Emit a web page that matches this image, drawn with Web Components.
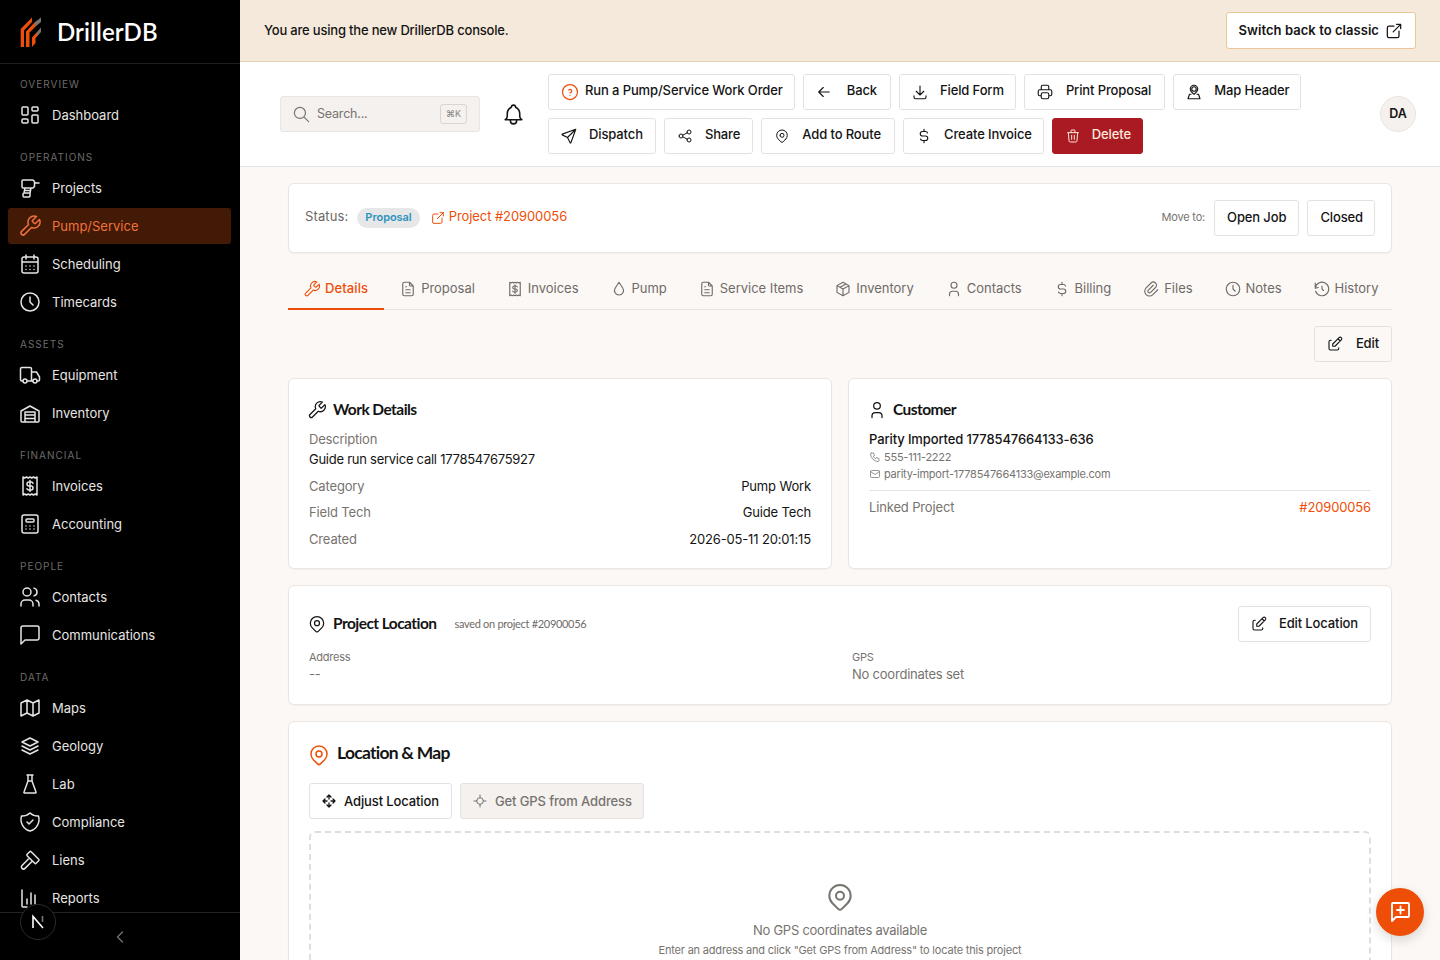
<!DOCTYPE html>
<html lang="en">
<head>
<meta charset="utf-8">
<title>DrillerDB</title>
<style>
    html, body { margin: 0; height: 100%; overflow: hidden; background: #fcf8f5; }
    body { font-family: "Inter", "Liberation Sans", sans-serif; font-size: 13px; color: #141414; }
</style>
</head>
<body>
<driller-app></driller-app>
<script>
const ICONS = {
    dashboard: 'M5 4h4a1 1 0 0 1 1 1v6a1 1 0 0 1 -1 1h-4a1 1 0 0 1 -1 -1v-6a1 1 0 0 1 1 -1M5 16h4a1 1 0 0 1 1 1v2a1 1 0 0 1 -1 1h-4a1 1 0 0 1 -1 -1v-2a1 1 0 0 1 1 -1M15 12h4a1 1 0 0 1 1 1v6a1 1 0 0 1 -1 1h-4a1 1 0 0 1 -1 -1v-6a1 1 0 0 1 1 -1M15 4h4a1 1 0 0 1 1 1v2a1 1 0 0 1 -1 1h-4a1 1 0 0 1 -1 -1v-2a1 1 0 0 1 1 -1',
    drill: 'M5 4h10l1.500 1.500v5L15 12H5a1 1 0 0 1 -1 -1V5a1 1 0 0 1 1 -1zM16.500 7H21M7 12l-1 5h6l1 -5M6 17a1 1 0 0 0 -1 1v2a1 1 0 0 0 1 1h5a1 1 0 0 0 1 -1v-3M7 14.500h5',
    wrench: 'M14.700 6.300a1 1 0 0 0 0 1.400l1.600 1.600a1 1 0 0 0 1.400 0l3.770 -3.770a6 6 0 0 1 -7.940 7.940l-6.910 6.910a2.120 2.120 0 0 1 -3 -3l6.910 -6.910a6 6 0 0 1 7.940 -7.940l-3.760 3.760z',
    calendar: 'M4 7a2 2 0 0 1 2 -2h12a2 2 0 0 1 2 2v12a2 2 0 0 1 -2 2h-12a2 2 0 0 1 -2 -2v-12zM16 3v4M8 3v4M4 10h16M8 14h.01M12 14h.01M16 14h.01M8 17.500h.01M12 17.500h.01M16 17.500h.01',
    clock: 'M3 12a9 9 0 1 0 18 0a9 9 0 0 0 -18 0M12 7v5l3 3',
    truck: 'M5 18H4a1.500 1.500 0 0 1 -1.500 -1.500V6a1.500 1.500 0 0 1 1.500 -1.500h8a1.500 1.500 0 0 1 1.500 1.500v11.500M9.500 18h5.500M19 18h1.500a1 1 0 0 0 1 -1v-3l-3 -5h-5M5 18a2 2 0 1 0 4 0a2 2 0 1 0 -4 0M15 18a2 2 0 1 0 4 0a2 2 0 1 0 -4 0',
    warehouse: 'M3 20V10l9 -5l9 5v10a1 1 0 0 1 -1 1H4a1 1 0 0 1 -1 -1zM7 21V11h10v10M7 14h10M7 17.500h10',
    receipt: 'M5 3l1.750 1l1.750 -1l1.750 1l1.750 -1l1.750 1l1.750 -1l1.750 1l1.750 -1v18l-1.750 -1l-1.750 1l-1.750 -1l-1.750 1l-1.750 -1l-1.750 1l-1.750 -1l-1.750 1zM15 9.200a1.800 1.800 0 0 0 -1.700 -1.200h-2.300a2 2 0 0 0 0 4h2a2 2 0 0 1 0 4h-2.300a1.800 1.800 0 0 1 -1.700 -1.200M12 6.500v11',
    calculator: 'M4 5a2 2 0 0 1 2 -2h12a2 2 0 0 1 2 2v14a2 2 0 0 1 -2 2h-12a2 2 0 0 1 -2 -2zM8 8a1 1 0 0 1 1 -1h6a1 1 0 0 1 1 1v1a1 1 0 0 1 -1 1h-6a1 1 0 0 1 -1 -1zM8 14v.01M12 14v.01M16 14v.01M8 17v.01M12 17v.01M16 17v.01',
    users: 'M5 7a4 4 0 1 0 8 0a4 4 0 1 0 -8 0M3 21v-2a4 4 0 0 1 4 -4h4a4 4 0 0 1 4 4v2M16 3.130a4 4 0 0 1 0 7.750M21 21v-2a4 4 0 0 0 -3 -3.850',
    message: 'M21 15a2 2 0 0 1 -2 2H7l-4 4V5a2 2 0 0 1 2 -2h14a2 2 0 0 1 2 2z',
    map: 'M3 7l6 -3l6 3l6 -3v13l-6 3l-6 -3l-6 3v-13M9 4v13M15 7v13',
    stack: 'M12 4l-8 4l8 4l8 -4l-8 -4M4 12l8 4l8 -4M4 16l8 4l8 -4',
    flask: 'M9 3h6M10 9h4M10 3v6l-4 11a.7 .7 0 0 0 .5 1h11a.7 .7 0 0 0 .5 -1l-4 -11v-6',
    shield: 'M12 3a12 12 0 0 0 8.500 3a12 12 0 0 1 -8.500 15a12 12 0 0 1 -8.500 -15a12 12 0 0 0 8.500 -3M9 12l2 2l4 -4',
    hammer: 'M11.414 10l-7.383 7.418a2.091 2.091 0 0 0 0 2.967a2.110 2.110 0 0 0 2.976 0l7.407 -7.385M18.121 15.293l2.586 -2.586a1 1 0 0 0 0 -1.414l-7.586 -7.586a1 1 0 0 0 -1.414 0l-2.586 2.586a1 1 0 0 0 0 1.414l7.586 7.586a1 1 0 0 0 1.414 0z',
    chart: 'M4 4v16a1 1 0 0 0 1 1h4M9 18v-5M13 18V7M17 18v-9',
    search: 'M3 10a7 7 0 1 0 14 0a7 7 0 1 0 -14 0M21 21l-6 -6',
    bell: 'M10 5a2 2 0 1 1 4 0a7 7 0 0 1 4 6v3a4 4 0 0 0 2 3h-16a4 4 0 0 0 2 -3v-3a7 7 0 0 1 4 -6M9 17v1a3 3 0 0 0 6 0v-1',
    help: 'M3 12a9 9 0 1 0 18 0a9 9 0 0 0 -18 0M12 16v.01M12 13a2 2 0 0 0 .914 -3.782a1.980 1.980 0 0 0 -2.414 .483',
    arrowLeft: 'M5 12h14M5 12l6 6M5 12l6 -6',
    download: 'M4 17v2a2 2 0 0 0 2 2h12a2 2 0 0 0 2 -2v-2M7 11l5 5l5 -5M12 4v12',
    printer: 'M17 17h2a2 2 0 0 0 2 -2v-4a2 2 0 0 0 -2 -2h-14a2 2 0 0 0 -2 2v4a2 2 0 0 0 2 2h2M17 9v-4a2 2 0 0 0 -2 -2h-6a2 2 0 0 0 -2 2v4M7 15a2 2 0 0 1 2 -2h6a2 2 0 0 1 2 2v4a2 2 0 0 1 -2 2h-6a2 2 0 0 1 -2 -2z',
    mapPerson: 'M9 8a3 3 0 1 0 6 0a3 3 0 1 0 -6 0M12 3a5 5 0 0 1 5 5c0 3 -5 7 -5 7s-5 -4 -5 -7a5 5 0 0 1 5 -5zM8 15H6l-2 6h16l-2 -6h-2',
    send: 'M10 14l11 -11M21 3l-6.500 18a.55 .55 0 0 1 -1 0l-3.500 -7l-7 -3.500a.55 .55 0 0 1 0 -1l18 -6.500',
    share: 'M3 12a3 3 0 1 0 6 0a3 3 0 1 0 -6 0M15 6a3 3 0 1 0 6 0a3 3 0 1 0 -6 0M15 18a3 3 0 1 0 6 0a3 3 0 1 0 -6 0M8.700 10.700l6.600 -3.400M8.700 13.300l6.600 3.400',
    pin: 'M9 11a3 3 0 1 0 6 0a3 3 0 1 0 -6 0M17.657 16.657l-4.243 4.243a2 2 0 0 1 -2.827 0l-4.244 -4.243a8 8 0 1 1 11.314 0z',
    dollar: 'M16.700 8a3 3 0 0 0 -2.700 -2h-4a3 3 0 0 0 0 6h4a3 3 0 0 1 0 6h-4a3 3 0 0 1 -2.700 -2M12 3v3m0 12v3',
    trash: 'M4 7h16M10 11v6M14 11v6M5 7l1 12a2 2 0 0 0 2 2h8a2 2 0 0 0 2 -2l1 -12M9 7V4a1 1 0 0 1 1 -1h4a1 1 0 0 1 1 1v3',
    external: 'M12 6h-6a2 2 0 0 0 -2 2v10a2 2 0 0 0 2 2h10a2 2 0 0 0 2 -2v-6M11 13l9 -9M15 4h5v5',
    file: 'M14 3v4a1 1 0 0 0 1 1h4M17 21h-10a2 2 0 0 1 -2 -2v-14a2 2 0 0 1 2 -2h7l5 5v11a2 2 0 0 1 -2 2zM9 9h1M9 13h6M9 17h6',
    droplet: 'M6.800 11a6 6 0 1 0 10.396 0l-5.197 -8l-5.200 8z',
    box: 'M12 3l8 4.500v9L12 21l-8 -4.500v-9L12 3M12 12l8 -4.500M12 12v9M12 12L4 7.500M16 5.250l-8 4.500',
    user: 'M8 7a4 4 0 1 0 8 0a4 4 0 1 0 -8 0M6 21v-2a4 4 0 0 1 4 -4h4a4 4 0 0 1 4 4v2',
    paperclip: 'M15 7l-6.500 6.500a1.500 1.500 0 0 0 3 3l6.500 -6.500a3 3 0 0 0 -6 -6l-6.500 6.500a4.500 4.500 0 0 0 9 9l6.500 -6.500',
    history: 'M12 8v4l2 2M3.050 11a9 9 0 1 1 .5 4M3 4v7h0M3 11l4 -1',
    edit: 'M7 7h-1a2 2 0 0 0 -2 2v9a2 2 0 0 0 2 2h9a2 2 0 0 0 2 -2v-1M20.385 6.585a2.100 2.100 0 0 0 -2.970 -2.970l-8.415 8.385v3h3l8.385 -8.415M16 5l3 3',
    phone: 'M5 4h4l2 5l-2.500 1.500a11 11 0 0 0 5 5l1.500 -2.500l5 2v4a2 2 0 0 1 -2 2a16 16 0 0 1 -15 -15a2 2 0 0 1 2 -2',
    mail: 'M3 7a2 2 0 0 1 2 -2h14a2 2 0 0 1 2 2v10a2 2 0 0 1 -2 2h-14a2 2 0 0 1 -2 -2zM3 7l9 6l9 -6',
    move: 'M18 9l3 3l-3 3M15 12h6M6 9l-3 3l3 3M3 12h6M9 18l3 3l3 -3M12 15v6M15 6l-3 -3l-3 3M12 3v6',
    crosshair: 'M7 12a5 5 0 1 0 10 0a5 5 0 1 0 -10 0M12 3v4M12 17v4M3 12h4M17 12h4',
    chevronLeft: 'M15 6l-6 6l6 6',
    messagePlus: 'M9 10h7M12.500 6.500v7M20 3H5a1 1 0 0 0 -1 1v17l4 -4h12a1 1 0 0 0 1 -1V4a1 1 0 0 0 -1 -1z'
};

const FONT_HEAD = '"Lato", "Inter", sans-serif';

/**
 * Inline svg icon, picked by its name attribute.
 */
class DdIcon extends HTMLElement {
    connectedCallback() {
        const size = this.getAttribute('size') || 16;
        const stroke = this.getAttribute('stroke') || 1.5;
        const path = ICONS[this.getAttribute('name')] || '';

        this.attachShadow({ mode: 'open' }).innerHTML = `
            <style>
                :host { display: inline-flex; flex: none; width: ${size}px; height: ${size}px; }
                svg { display: block; width: 100%; height: 100%; }
            </style>
            <svg viewBox="0 0 24 24" fill="none" stroke="currentColor" stroke-width="${stroke}"
                stroke-linecap="round" stroke-linejoin="round"><path d="${path}"/></svg>
        `;
    }
}

/**
 * Outlined button with an optional leading icon.
 * --shift nudges the label up, the text sits above the icon's centre.
 */
class DdButton extends HTMLElement {
    connectedCallback() {
        const icon = this.getAttribute('icon');
        const size = this.getAttribute('icon-size') || 18;
        const stroke = this.getAttribute('icon-stroke') || 1.5;
        const iconMarkup = icon
            ? `<span class="icon"><dd-icon name="${icon}" size="${size}" stroke="${stroke}"></dd-icon></span>`
            : '';

        this.attachShadow({ mode: 'open' }).innerHTML = `
            <style>
                :host {
                    display: inline-flex;
                    align-items: center;
                    gap: ${this.getAttribute('gap') || 11}px;
                    flex: none;
                    box-sizing: border-box;
                    height: 36px;
                    padding: 0 12px;
                    background: #fff;
                    border: 1px solid #e4e2e0;
                    border-radius: 3px;
                    font-size: 13px;
                    font-weight: 500;
                    letter-spacing: -0.12px;
                    color: #141414;
                    white-space: nowrap;
                }
                :host([icon]) { padding-left: 11px; }
                :host([variant="danger"]) { background: #aa1a22; border-color: #aa1a22; color: #fbe9dc; }
                :host([variant="ghost"]) { background: transparent; }
                :host([variant="disabled"]) { background: #f4f1ee; color: #77736f; }
                .icon { display: flex; }
                :host([accent]) .icon { color: #ef4e08; }
                .text { padding-bottom: var(--shift, 2px); }
            </style>
            ${iconMarkup}
            <span class="text"><slot></slot></span>
        `;
    }
}

/**
 * Sidebar link. The active one gets the orange treatment.
 */
class NavItem extends HTMLElement {
    connectedCallback() {
        this.attachShadow({ mode: 'open' }).innerHTML = `
            <style>
                :host {
                    display: flex;
                    align-items: center;
                    gap: 10px;
                    height: 36px;
                    padding: 0 10px;
                    border-radius: 3px;
                    font-size: 13px;
                    color: #e7e5e3;
                }
                :host([active]) { background: #431a05; color: #f0713f; }
            </style>
            <dd-icon name="${this.getAttribute('icon')}" size="24"></dd-icon>
            <slot></slot>
        `;
    }
}

class NavSection extends HTMLElement {
    connectedCallback() {
        this.attachShadow({ mode: 'open' }).innerHTML = `
            <style>
                :host { display: flex; flex-direction: column; gap: 2px; }
                .label {
                    height: 15px;
                    line-height: 15px;
                    margin-bottom: 3px;
                    padding-left: 12px;
                    font-size: 10px;
                    letter-spacing: 1px;
                    color: #6d6b69;
                }
            </style>
            <div class="label">${this.getAttribute('label')}</div>
            <slot></slot>
        `;
    }
}

class AppSidebar extends HTMLElement {
    connectedCallback() {
        this.attachShadow({ mode: 'open' }).innerHTML = `
            <style>
                :host {
                    position: relative;
                    display: flex;
                    flex-direction: column;
                    flex: none;
                    width: 240px;
                    height: 100%;
                    background: #000;
                }
                .logo {
                    display: flex;
                    align-items: center;
                    gap: 15px;
                    flex: none;
                    box-sizing: border-box;
                    height: 64px;
                    padding-left: 20px;
                    border-bottom: 1px solid #1f1f1f;
                    font: 600 24px ${FONT_HEAD};
                    letter-spacing: 0.1px;
                    color: #fff;
                }
                .logo svg { width: 22px; height: 30px; }
                nav {
                    flex: 1;
                    min-height: 0;
                    overflow: hidden;
                    display: flex;
                    flex-direction: column;
                    gap: 17px;
                    padding: 13px 9px 0 8px;
                }
                footer {
                    flex: none;
                    display: flex;
                    align-items: center;
                    justify-content: center;
                    box-sizing: border-box;
                    height: 48px;
                    border-top: 1px solid #232323;
                    color: #77736f;
                    background: #000;
                }
                .next {
                    position: absolute;
                    left: 20px;
                    top: 904px;
                    width: 36px;
                    height: 36px;
                    box-sizing: border-box;
                    display: flex;
                    align-items: center;
                    justify-content: center;
                    border: 1px solid #2b2b2b;
                    border-radius: 50%;
                    background: #000;
                }
            </style>
            <div class="logo">
                <svg viewBox="0 0 22 30">
                    <path fill="#ef4e08" d="M0.700 30V12L12 0.500V5L4 13.500V30zM6 30V14.500L15 5V10L9.500 15.500V30zM12 30V20.500L17 15V19.500L15.500 21V26z"/>
                    <path fill="#77736f" d="M15 5l6 -4.500V5l-6 5zM17 15l4 -4.500V15l-4 4.500z"/>
                </svg>
                DrillerDB
            </div>
            <nav><slot></slot></nav>
            <footer><dd-icon name="chevronLeft" size="20"></dd-icon></footer>
            <div class="next">
                <svg width="16" height="16" viewBox="0 0 16 16" fill="none" stroke="#fff" stroke-width="1.600">
                    <path d="M3 14V2.500L13 14"/><path d="M12.500 2v6" stroke="#777"/>
                </svg>
            </div>
        `;
    }
}

class ConsoleBanner extends HTMLElement {
    connectedCallback() {
        this.attachShadow({ mode: 'open' }).innerHTML = `
            <style>
                :host {
                    display: flex;
                    align-items: center;
                    justify-content: space-between;
                    box-sizing: border-box;
                    height: 62px;
                    padding: 0 24px;
                    background: #f4e9da;
                    border-bottom: 1px solid #e5d2ae;
                    font-size: 13px;
                    font-weight: 500;
                    letter-spacing: -0.19px;
                }
                span { padding-bottom: 2px; }
                a {
                    display: inline-flex;
                    align-items: center;
                    gap: 5px;
                    height: 37px;
                    box-sizing: border-box;
                    padding: 0 11px 0 12px;
                    background: #fff;
                    border: 1px solid #e9c796;
                    border-radius: 3px;
                    font-weight: 600;
                    letter-spacing: 0.05px;
                }
            </style>
            <span>You are using the new DrillerDB console.</span>
            <a><span>Switch back to classic</span><dd-icon name="external" size="20"></dd-icon></a>
        `;
    }
}

class TopBar extends HTMLElement {
    connectedCallback() {
        this.attachShadow({ mode: 'open' }).innerHTML = `
            <style>
                :host {
                    display: flex;
                    align-items: center;
                    box-sizing: border-box;
                    height: 105px;
                    padding: 0 24px 0 40px;
                    background: #fff;
                    border-bottom: 1px solid #e6e4e2;
                }
                .search {
                    display: flex;
                    align-items: center;
                    gap: 6px;
                    flex: none;
                    box-sizing: border-box;
                    width: 200px;
                    height: 36px;
                    padding: 0 12px 0 11px;
                    background: #f4f1ee;
                    border: 1px solid #e8e5e2;
                    border-radius: 3px;
                    color: #77736f;
                    font-size: 12.500px;
                }
                .search span { flex: 1; padding-bottom: 2px; letter-spacing: -0.2px; }
                kbd {
                    box-sizing: border-box;
                    height: 20px;
                    padding: 0 5px;
                    border: 1px solid #d8d5d2;
                    border-radius: 3px;
                    font: 9px "Inter", sans-serif;
                    line-height: 18px;
                    color: #8a8683;
                }
                .bell { flex: none; margin: 0 22px 0 21px; display: flex; }
                .actions { flex: 1; display: flex; flex-wrap: wrap; gap: 8px; }
                .avatar {
                    display: flex;
                    align-items: center;
                    justify-content: center;
                    flex: none;
                    width: 36px;
                    height: 36px;
                    box-sizing: border-box;
                    padding-bottom: 2px;
                    border: 1px solid #e8e5e2;
                    border-radius: 50%;
                    background: #f4f1ee;
                    font-size: 12.500px;
                    font-weight: 600;
                }
            </style>
            <div class="search">
                <dd-icon name="search" size="19"></dd-icon>
                <span>Search...</span>
                <kbd>⌘K</kbd>
            </div>
            <div class="bell"><dd-icon name="bell" size="25"></dd-icon></div>
            <div class="actions"><slot></slot></div>
            <div class="avatar">DA</div>
        `;
    }
}

class StatusCard extends HTMLElement {
    connectedCallback() {
        this.attachShadow({ mode: 'open' }).innerHTML = `
            <style>
                :host {
                    display: flex;
                    align-items: center;
                    box-sizing: border-box;
                    height: 70px;
                    padding: 0 16px;
                    background: #fff;
                    border: 1px solid #e9e6e3;
                    border-radius: 6px;
                    box-shadow: 0 1px 2px rgba(0, 0, 0, .04);
                }
                .label { color: #6b6864; margin-right: 9px; padding-bottom: 4px; letter-spacing: 0.12px; }
                .badge {
                    display: inline-flex;
                    align-items: center;
                    box-sizing: border-box;
                    height: 20px;
                    padding: 0 8px 2px;
                    border-radius: 10px;
                    background: #e5e7e8;
                    color: #2f93bd;
                    font-size: 11px;
                    font-weight: 600;
                    letter-spacing: -0.05px;
                }
                .link {
                    display: inline-flex;
                    align-items: center;
                    gap: 3px;
                    margin-left: 10px;
                    color: #ef4e08;
                    letter-spacing: -0.08px;
                }
                .link span { padding-bottom: 4px; }
                .move {
                    margin-left: auto;
                    margin-right: 9px;
                    padding-bottom: 2px;
                    font-size: 11px;
                    letter-spacing: -0.2px;
                    color: #77736f;
                }
                dd-button + dd-button { margin-left: 8px; padding-right: 11px; }
            </style>
            <span class="label">Status:</span>
            <span class="badge">Proposal</span>
            <span class="link"><dd-icon name="external" size="16"></dd-icon><span>Project #20900056</span></span>
            <span class="move">Move to:</span>
            <dd-button>Open Job</dd-button>
            <dd-button>Closed</dd-button>
        `;
    }
}

class TabBar extends HTMLElement {
    connectedCallback() {
        this.attachShadow({ mode: 'open' }).innerHTML = `
            <style>
                :host {
                    display: flex;
                    box-sizing: border-box;
                    height: 41px;
                    border-bottom: 1px solid #e6e4e2;
                }
            </style>
            <slot></slot>
        `;
    }
}

class TabItem extends HTMLElement {
    connectedCallback() {
        this.attachShadow({ mode: 'open' }).innerHTML = `
            <style>
                :host {
                    display: flex;
                    align-items: center;
                    gap: 4px;
                    flex: none;
                    box-sizing: border-box;
                    height: 41px;
                    padding: 0 16px 2px 15px;
                    font-size: 13px;
                    letter-spacing: -0.02px;
                    white-space: nowrap;
                    color: #6f6b68;
                }
                :host([active]) {
                    color: #ef4e08;
                    font-weight: 500;
                    border-bottom: 2px solid #ef4e08;
                    padding: 0 16px 0 15px;
                    letter-spacing: 0.1px;
                }
                span { padding-bottom: 2px; }
            </style>
            <dd-icon name="${this.getAttribute('icon')}" size="18"></dd-icon>
            <span><slot></slot></span>
        `;
    }
}

/**
 * White panel with a titled header. Header actions go in the "action" slot.
 */
class InfoCard extends HTMLElement {
    connectedCallback() {
        const large = this.hasAttribute('large');
        const iconSize = large ? 24 : 20;

        this.attachShadow({ mode: 'open' }).innerHTML = `
            <style>
                :host {
                    display: block;
                    box-sizing: border-box;
                    padding: 20px;
                    background: #fff;
                    border: 1px solid #e9e6e3;
                    border-radius: 6px;
                    box-shadow: 0 1px 2px rgba(0, 0, 0, .04);
                }
                header {
                    display: flex;
                    align-items: center;
                    gap: 8px;
                    min-height: 22px;
                }
                h2 {
                    margin: 0;
                    padding-bottom: ${large ? 4 : 2}px;
                    font: 700 ${large ? 17.5 : 15.5}px ${FONT_HEAD};
                    letter-spacing: ${large ? -0.74 : -0.55}px;
                    color: #141414;
                }
                dd-icon { margin: 0 -2px; color: ${large ? '#ef4e08' : '#141414'}; }
                .note { margin-left: 10px; padding-bottom: 2px; }
                .action { margin-left: auto; display: flex; }
            </style>
            <header>
                <dd-icon name="${this.getAttribute('icon')}" size="${iconSize}"></dd-icon>
                <h2>${this.getAttribute('title')}</h2>
                <span class="note"><slot name="note"></slot></span>
                <span class="action"><slot name="action"></slot></span>
            </header>
            <slot></slot>
        `;
    }
}

class DetailRow extends HTMLElement {
    connectedCallback() {
        this.attachShadow({ mode: 'open' }).innerHTML = `
            <style>
                :host {
                    display: flex;
                    justify-content: space-between;
                    line-height: 18px;
                    font-size: 13px;
                    letter-spacing: -0.15px;
                    color: #77736f;
                }
                .value { color: var(--value-color, #141414); }
            </style>
            <span>${this.getAttribute('label')}</span>
            <span class="value"><slot></slot></span>
        `;
    }
}

class WorkDetails extends HTMLElement {
    connectedCallback() {
        this.attachShadow({ mode: 'open' }).innerHTML = `
            <style>
                :host { display: block; }
                info-card { height: 191px; }
                .label { margin-top: 9px; line-height: 18px; letter-spacing: -0.2px; color: #77736f; }
                .text { margin-top: 2px; line-height: 18px; letter-spacing: -0.26px; }
                .category { margin-top: 9px; }
                .tech { margin-top: 8px; }
                .created { margin-top: 9px; }
            </style>
            <info-card icon="wrench" title="Work Details">
                <div class="label">Description</div>
                <div class="text">Guide run service call 1778547675927</div>
                <detail-row class="category" label="Category">Pump Work</detail-row>
                <detail-row class="tech" label="Field Tech">Guide Tech</detail-row>
                <detail-row class="created" label="Created">2026-05-11 20:01:15</detail-row>
            </info-card>
        `;
    }
}

class CustomerCard extends HTMLElement {
    connectedCallback() {
        this.attachShadow({ mode: 'open' }).innerHTML = `
            <style>
                :host { display: block; }
                info-card { height: 191px; }
                .name { margin-top: 9px; line-height: 18px; font-weight: 500; letter-spacing: -0.12px; }
                .contact {
                    display: flex;
                    align-items: center;
                    gap: 3px;
                    height: 17px;
                    font-size: 11px;
                    letter-spacing: -0.23px;
                    color: #77736f;
                }
                hr { margin: 8px 0 7px; border: 0; border-top: 1px solid #e6e4e2; }
                detail-row { --value-color: #ef4e08; }
            </style>
            <info-card icon="user" title="Customer">
                <div class="name">Parity Imported 1778547664133-636</div>
                <div class="contact"><dd-icon name="phone" size="12"></dd-icon>555-111-2222</div>
                <div class="contact"><dd-icon name="mail" size="12"></dd-icon>parity-import-1778547664133@example.com</div>
                <hr>
                <detail-row label="Linked Project">#20900056</detail-row>
            </info-card>
        `;
    }
}

class ProjectLocation extends HTMLElement {
    connectedCallback() {
        this.attachShadow({ mode: 'open' }).innerHTML = `
            <style>
                :host { display: block; }
                info-card { height: 120px; }
                .note { font: 11px ${FONT_HEAD}; letter-spacing: -0.3px; color: #6f6b68; }
                .grid {
                    display: grid;
                    grid-template-columns: 1fr 1fr;
                    column-gap: 24px;
                    margin-top: 7px;
                    color: #77736f;
                }
                .small { font-size: 11px; line-height: 16px; letter-spacing: -0.25px; }
                .value { line-height: 18px; letter-spacing: -0.22px; }
            </style>
            <info-card icon="pin" title="Project Location">
                <span slot="note" class="note">saved on project #20900056</span>
                <dd-button slot="action" icon="edit">Edit Location</dd-button>
                <div class="grid">
                    <div><div class="small">Address</div><div class="value">--</div></div>
                    <div><div class="small">GPS</div><div class="value">No coordinates set</div></div>
                </div>
            </info-card>
        `;
    }
}

class LocationMap extends HTMLElement {
    connectedCallback() {
        this.attachShadow({ mode: 'open' }).innerHTML = `
            <style>
                :host { display: block; }
                .buttons { display: flex; gap: 8px; margin-top: 16px; }
                dd-button { --shift: 0px; }
                dd-button[variant] { padding-right: 11px; }
                .empty {
                    display: flex;
                    flex-direction: column;
                    align-items: center;
                    box-sizing: border-box;
                    height: 220px;
                    margin-top: 12px;
                    padding-top: 48px;
                    border: 2px dashed #e0dedc;
                    border-radius: 6px;
                    color: #77736f;
                }
                .title { margin-top: 8px; line-height: 18px; letter-spacing: -0.25px; }
                .hint { margin-top: 3px; font-size: 11px; line-height: 16px; letter-spacing: -0.19px; }
            </style>
            <info-card large icon="pin" title="Location &amp; Map">
                <div class="buttons">
                    <dd-button icon="move" icon-size="16" icon-stroke="2" gap="7">Adjust Location</dd-button>
                    <dd-button icon="crosshair" icon-size="16" gap="7" variant="disabled">Get GPS from Address</dd-button>
                </div>
                <div class="empty">
                    <dd-icon name="pin" size="32"></dd-icon>
                    <div class="title">No GPS coordinates available</div>
                    <div class="hint">Enter an address and click "Get GPS from Address" to locate this project</div>
                </div>
            </info-card>
        `;
    }
}

class ChatFab extends HTMLElement {
    connectedCallback() {
        this.attachShadow({ mode: 'open' }).innerHTML = `
            <style>
                :host {
                    position: fixed;
                    right: 16px;
                    bottom: 24px;
                    display: flex;
                    align-items: center;
                    justify-content: center;
                    width: 48px;
                    height: 48px;
                    border-radius: 50%;
                    background: #ef4e08;
                    color: #fff;
                    box-shadow: 0 4px 12px rgba(0, 0, 0, .15);
                }
            </style>
            <dd-icon name="messagePlus" size="24" stroke="1.800"></dd-icon>
        `;
    }
}

class DrillerApp extends HTMLElement {
    connectedCallback() {
        this.attachShadow({ mode: 'open' }).innerHTML = `
            <style>
                :host { display: flex; height: 100vh; overflow: hidden; }
                .main { flex: 1; min-width: 0; display: flex; flex-direction: column; }
                top-bar dd-button { --shift: 4px; }
                top-bar dd-button[icon-size="16"] { padding-left: 12px; }
                top-bar .tight { padding-right: 11px; }
                top-bar .wide { padding-right: 13px; }
                .content {
                    flex: 1;
                    min-height: 0;
                    overflow: hidden;
                    display: flex;
                    flex-direction: column;
                    gap: 16px;
                    padding: 16px 48px 0;
                    background: #fcf8f5;
                }
                .edit-row { display: flex; justify-content: flex-end; }
                .columns { display: grid; grid-template-columns: 1fr 1fr; gap: 16px; }
                .content > * { flex: none; }
            </style>
            <app-sidebar>
                <nav-section label="OVERVIEW">
                    <nav-item icon="dashboard">Dashboard</nav-item>
                </nav-section>
                <nav-section label="OPERATIONS">
                    <nav-item icon="drill">Projects</nav-item>
                    <nav-item icon="wrench" active>Pump/Service</nav-item>
                    <nav-item icon="calendar">Scheduling</nav-item>
                    <nav-item icon="clock">Timecards</nav-item>
                </nav-section>
                <nav-section label="ASSETS">
                    <nav-item icon="truck">Equipment</nav-item>
                    <nav-item icon="warehouse">Inventory</nav-item>
                </nav-section>
                <nav-section label="FINANCIAL">
                    <nav-item icon="receipt">Invoices</nav-item>
                    <nav-item icon="calculator">Accounting</nav-item>
                </nav-section>
                <nav-section label="PEOPLE">
                    <nav-item icon="users">Contacts</nav-item>
                    <nav-item icon="message">Communications</nav-item>
                </nav-section>
                <nav-section label="DATA">
                    <nav-item icon="map">Maps</nav-item>
                    <nav-item icon="stack">Geology</nav-item>
                    <nav-item icon="flask">Lab</nav-item>
                    <nav-item icon="shield">Compliance</nav-item>
                    <nav-item icon="hammer">Liens</nav-item>
                    <nav-item icon="chart">Reports</nav-item>
                </nav-section>
            </app-sidebar>
            <div class="main">
                <console-banner></console-banner>
                <top-bar>
                    <dd-button class="tight" icon="help" icon-size="20" gap="5" accent>Run a Pump/Service Work Order</dd-button>
                    <dd-button class="wide" icon="arrowLeft" gap="14">Back</dd-button>
                    <dd-button class="tight" icon="download">Field Form</dd-button>
                    <dd-button class="wide" icon="printer" gap="12">Print Proposal</dd-button>
                    <dd-button class="tight" icon="mapPerson">Map Header</dd-button>
                    <dd-button icon="send">Dispatch</dd-button>
                    <dd-button icon="share" icon-size="16" gap="12">Share</dd-button>
                    <dd-button class="wide" icon="pin" icon-size="16" gap="12">Add to Route</dd-button>
                    <dd-button class="tight" icon="dollar">Create Invoice</dd-button>
                    <dd-button class="tight" icon="trash" icon-size="16" gap="11" variant="danger">Delete</dd-button>
                </top-bar>
                <div class="content">
                    <status-card></status-card>
                    <tab-bar>
                        <tab-item icon="wrench" active>Details</tab-item>
                        <tab-item icon="file">Proposal</tab-item>
                        <tab-item icon="receipt">Invoices</tab-item>
                        <tab-item icon="droplet">Pump</tab-item>
                        <tab-item icon="file">Service Items</tab-item>
                        <tab-item icon="box">Inventory</tab-item>
                        <tab-item icon="user">Contacts</tab-item>
                        <tab-item icon="dollar">Billing</tab-item>
                        <tab-item icon="paperclip">Files</tab-item>
                        <tab-item icon="clock">Notes</tab-item>
                        <tab-item icon="history">History</tab-item>
                    </tab-bar>
                    <div class="edit-row"><dd-button icon="edit" gap="12" variant="ghost">Edit</dd-button></div>
                    <div class="columns">
                        <work-details></work-details>
                        <customer-card></customer-card>
                    </div>
                    <project-location></project-location>
                    <location-map></location-map>
                </div>
            </div>
            <chat-fab></chat-fab>
        `;
    }
}

customElements.define('dd-icon', DdIcon);
customElements.define('dd-button', DdButton);
customElements.define('nav-item', NavItem);
customElements.define('nav-section', NavSection);
customElements.define('app-sidebar', AppSidebar);
customElements.define('console-banner', ConsoleBanner);
customElements.define('top-bar', TopBar);
customElements.define('status-card', StatusCard);
customElements.define('tab-bar', TabBar);
customElements.define('tab-item', TabItem);
customElements.define('info-card', InfoCard);
customElements.define('detail-row', DetailRow);
customElements.define('work-details', WorkDetails);
customElements.define('customer-card', CustomerCard);
customElements.define('project-location', ProjectLocation);
customElements.define('location-map', LocationMap);
customElements.define('chat-fab', ChatFab);
customElements.define('driller-app', DrillerApp);
</script>
</body>
</html>
